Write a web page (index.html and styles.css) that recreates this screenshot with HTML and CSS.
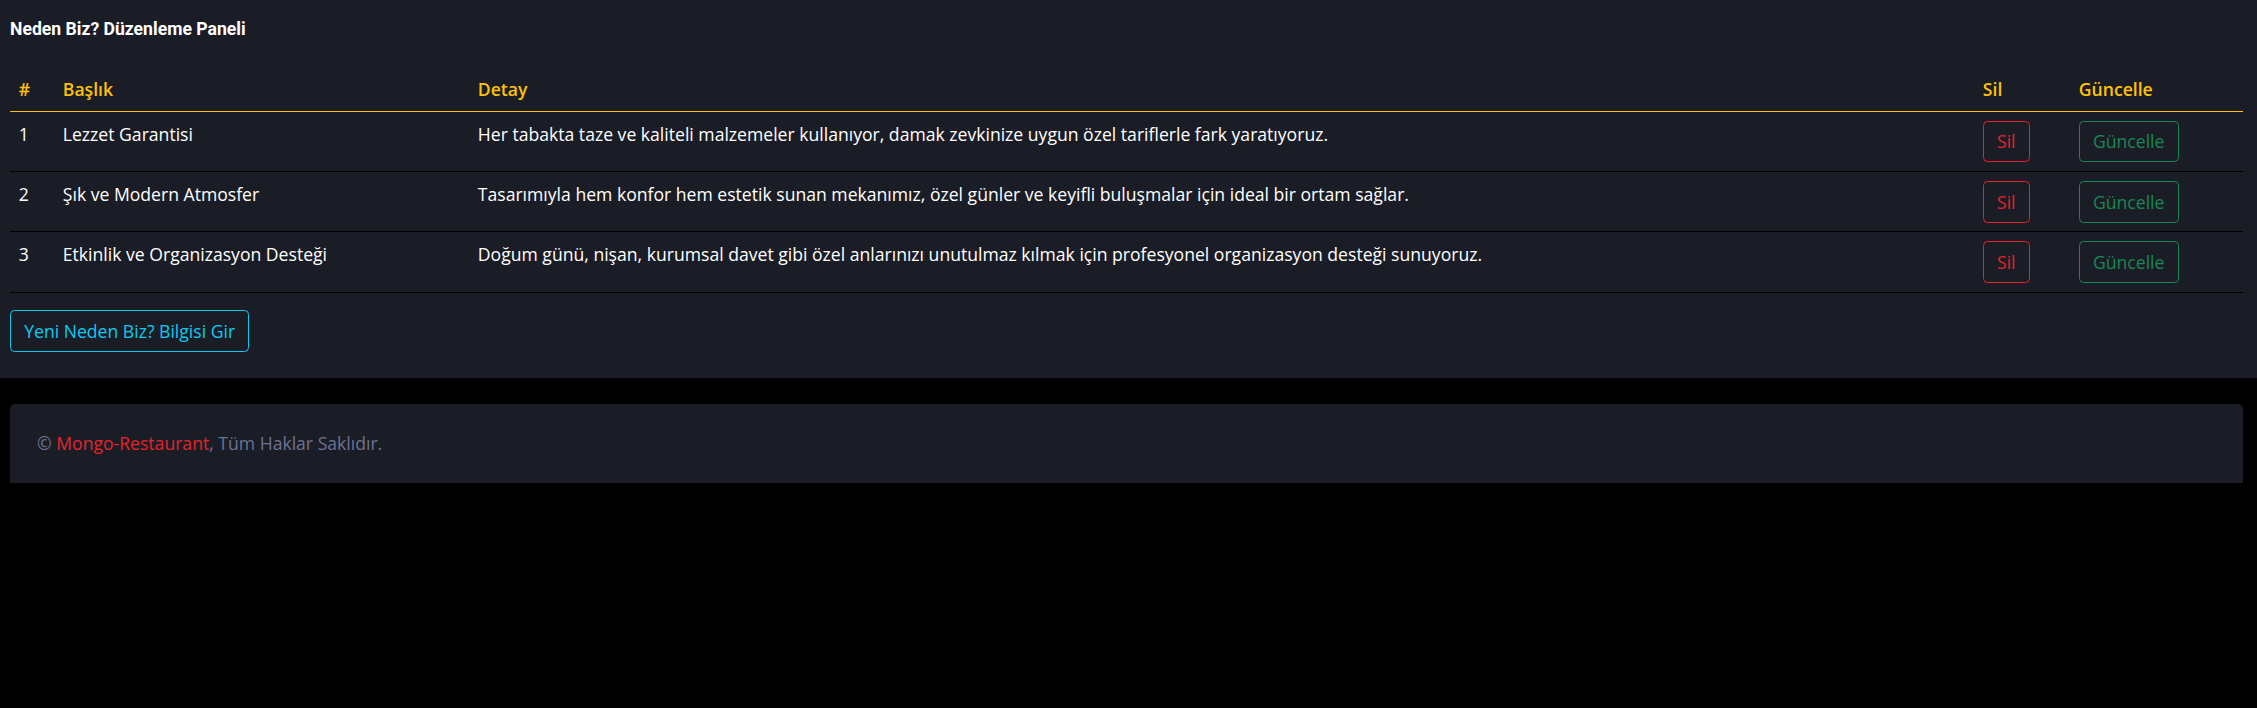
FILE: index.html
```html
<!DOCTYPE html>
<html lang="tr">
<head>
<meta charset="utf-8">
<title>Neden Biz? Düzenleme Paneli</title>
<link rel="stylesheet" href="styles.css">
</head>
<body>
<div class="panel">
  <h6 class="title">Neden Biz? Düzenleme Paneli</h6>
  <table class="grid">
    <colgroup>
      <col class="c-num">
      <col class="c-title">
      <col class="c-detail">
      <col class="c-del">
      <col class="c-upd">
    </colgroup>
    <thead>
      <tr>
        <th>#</th>
        <th>Başlık</th>
        <th>Detay</th>
        <th>Sil</th>
        <th>Güncelle</th>
      </tr>
    </thead>
    <tbody>
      <tr>
        <td>1</td>
        <td>Lezzet Garantisi</td>
        <td>Her tabakta taze ve kaliteli malzemeler kullanıyor, damak zevkinize uygun özel tariflerle fark yaratıyoruz.</td>
        <td><a class="btn btn-danger" href="#">Sil</a></td>
        <td><a class="btn btn-success" href="#">Güncelle</a></td>
      </tr>
      <tr>
        <td>2</td>
        <td>Şık ve Modern Atmosfer</td>
        <td>Tasarımıyla hem konfor hem estetik sunan mekanımız, özel günler ve keyifli buluşmalar için ideal bir ortam sağlar.</td>
        <td><a class="btn btn-danger" href="#">Sil</a></td>
        <td><a class="btn btn-success" href="#">Güncelle</a></td>
      </tr>
      <tr>
        <td>3</td>
        <td>Etkinlik ve Organizasyon Desteği</td>
        <td>Doğum günü, nişan, kurumsal davet gibi özel anlarınızı unutulmaz kılmak için profesyonel organizasyon desteği sunuyoruz.</td>
        <td><a class="btn btn-danger" href="#">Sil</a></td>
        <td><a class="btn btn-success" href="#">Güncelle</a></td>
      </tr>
    </tbody>
  </table>
  <a class="btn btn-info" href="#">Yeni Neden Biz? Bilgisi Gir</a>
</div>
<footer class="footer">
  <span class="muted">© </span><a class="brand" href="#">Mongo-Restaurant</a><span class="muted">, Tüm Haklar Saklıdır.</span>
</footer>
</body>
</html>
```

FILE: styles.css
```css
html, body {
  margin: 0;
  padding: 0;
}
body {
  background: #000;
  color: #fff;
  font-family: "Open Sans", "Noto Sans", sans-serif;
  font-size: 17.6px;
  line-height: 1.5;
}
.panel {
  background: #1b1d26;
  padding: 19px 14px 26px 10px;
}
.title {
  font-family: Roboto, "Liberation Sans", sans-serif;
  font-weight: 700;
  font-size: 17.6px;
  line-height: 1.2;
  margin: 0 0 27px 0;
  color: #fff;
}
.grid {
  width: 100%;
  table-layout: fixed;
  border-collapse: collapse;
  margin-bottom: 17.6px;
}
.c-num { width: 44px; }
.c-title { width: 415px; }
.c-detail { width: 1505px; }
.c-del { width: 96px; }
.c-upd { width: 173px; }
.grid th {
  color: #ffc107;
  font-weight: 600;
  text-align: left;
  padding: 8.8px;
  border-bottom: 1px solid #ffc107;
}
.grid td {
  padding: 8.8px;
  vertical-align: top;
  border-bottom: 1px solid #000;
}
.btn {
  display: inline-block;
  padding: 6.6px 13.2px;
  border: 1.1px solid transparent;
  border-radius: 4.5px;
  font-size: 17.6px;
  line-height: 1.5;
  text-decoration: none;
  background: transparent;
}
.btn-danger {
  color: #e3242b;
  border-color: #e3242b;
}
.btn-success {
  color: #198754;
  border-color: #198754;
}
.btn-info {
  color: #0dcaf0;
  border-color: #0dcaf0;
}
.footer {
  background: #1b1d26;
  margin: 26px 14px 0 10px;
  padding: 26.4px 27px;
  border-radius: 5px 5px 0 0;
}
.muted {
  color: #6c7293;
}
.brand {
  color: #e3242b;
  text-decoration: none;
}
```
